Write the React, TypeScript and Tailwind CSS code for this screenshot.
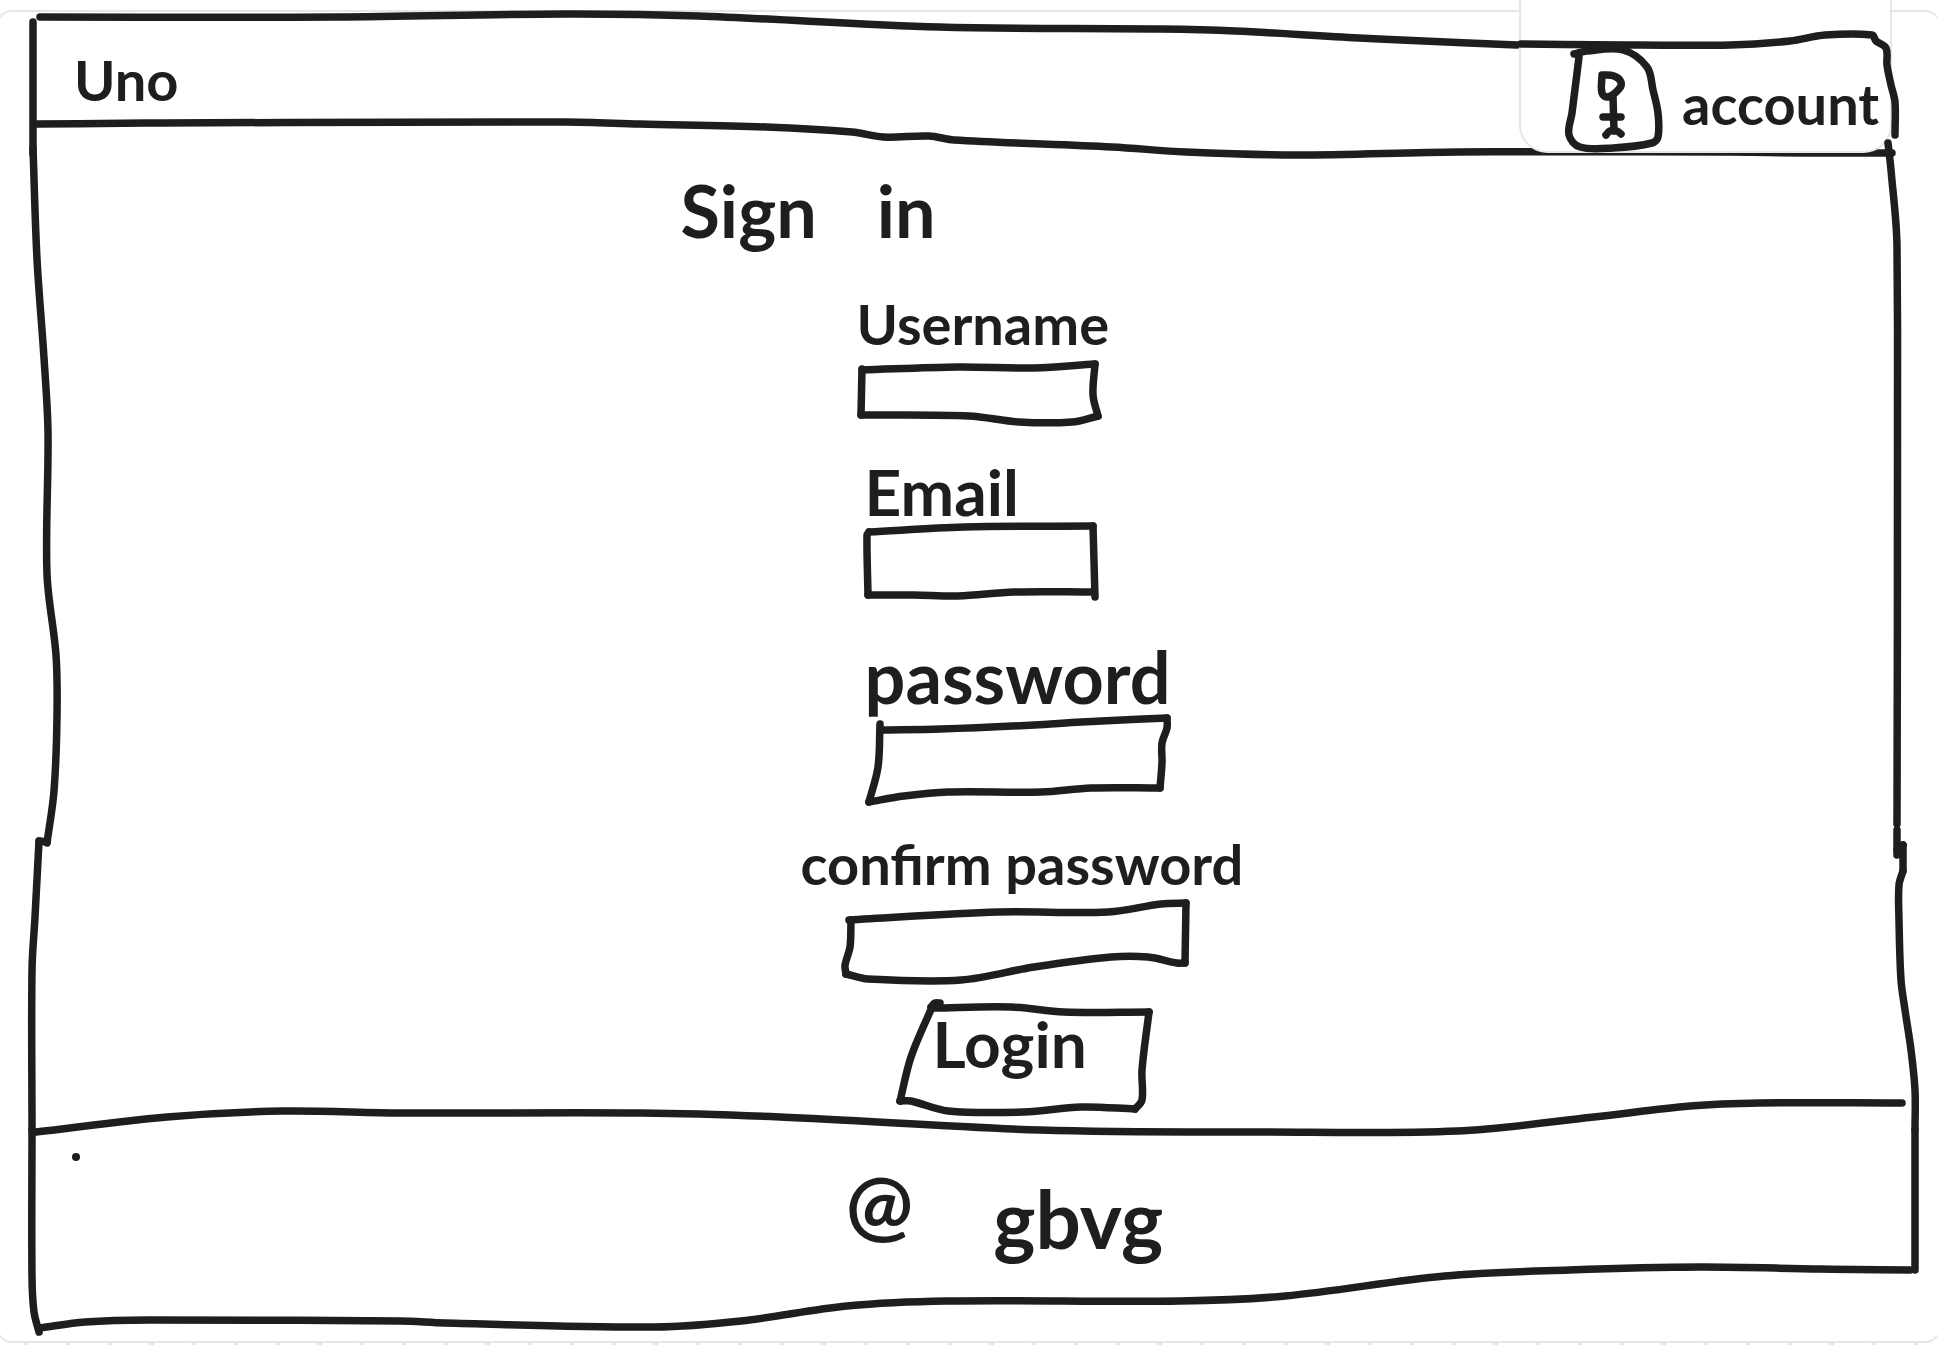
import type { ReactNode } from "react";

type Point = [number, number];
type Stroke = Point[];

/* Turns a list of points into one smooth pen stroke. */
function toPath(points: Stroke): string {
  let d = `M${points[0][0]} ${points[0][1]}`;
  for (let i = 0; i < points.length - 1; i++) {
    const p0 = points[Math.max(i - 1, 0)];
    const p1 = points[i];
    const p2 = points[i + 1];
    const p3 = points[Math.min(i + 2, points.length - 1)];
    const len = Math.hypot(p2[0] - p1[0], p2[1] - p1[1]);
    const before = Math.hypot(p2[0] - p0[0], p2[1] - p0[1]) || 1;
    const after = Math.hypot(p3[0] - p1[0], p3[1] - p1[1]) || 1;
    const k = len / 3;
    const c1 = [p1[0] + ((p2[0] - p0[0]) / before) * k, p1[1] + ((p2[1] - p0[1]) / before) * k];
    const c2 = [p2[0] - ((p3[0] - p1[0]) / after) * k, p2[1] - ((p3[1] - p1[1]) / after) * k];
    d += ` C${c1[0]} ${c1[1]} ${c2[0]} ${c2[1]} ${p2[0]} ${p2[1]}`;
  }
  return d;
}

function Sketch({ viewBox, strokes }: { viewBox: string; strokes: Stroke[] }) {
  return (
    <svg
      aria-hidden="true"
      viewBox={viewBox}
      preserveAspectRatio="none"
      className="pointer-events-none absolute inset-0 h-full w-full overflow-visible fill-none stroke-[#1e1e1e] stroke-[7.5]"
      strokeLinecap="round"
      strokeLinejoin="round"
    >
      {strokes.map((s, i) => (
        <path key={i} d={toPath(s)} vectorEffect="non-scaling-stroke" />
      ))}
    </svg>
  );
}

const headerStrokes: Stroke[] = [
  [[40, 17], [335, 17], [565, 14], [698, 16], [939, 27], [1161, 29], [1235, 31], [1359, 38], [1517, 45]],
  [[36, 124], [163, 123], [565, 122], [640, 124], [766, 127], [852, 132], [883, 137], [929, 136], [954, 140], [1112, 147], [1186, 152], [1297, 155], [1458, 152], [1720, 152], [1810, 153], [1892, 153]],
  [[33, 22], [33, 154]],
];

const accountStrokes: Stroke[] = [
  [[1521, 44], [1640, 45], [1730, 45], [1790, 41], [1825, 35], [1872, 35], [1876, 41], [1886, 48], [1887, 65], [1891, 85], [1895, 102], [1895, 135]],
];

const mainStrokes: Stroke[] = [
  [[33, 148], [37, 259], [44, 358], [48, 432], [47, 574], [56, 655], [57, 716], [54, 791], [47, 843]],
  [[47, 842], [39, 841]],
  [[39, 841], [35, 917], [32, 970], [32, 1130]],
  [[1888, 143], [1891, 170], [1897, 247], [1897, 824]],
  [[1897, 830], [1897, 855]],
  [[1897, 850], [1903, 845]],
  [[1903, 845], [1903, 871]],
  [[1903, 871], [1899, 885], [1899, 920], [1901, 980], [1905, 1010], [1911, 1050], [1915, 1090], [1915, 1130]],
];

const footerStrokes: Stroke[] = [
  [[36, 1132], [167, 1117], [283, 1111], [400, 1113], [642, 1113], [780, 1117], [1040, 1130], [1260, 1132], [1457, 1131], [1594, 1117], [1690, 1106], [1760, 1103], [1902, 1103]],
  [[32, 1130], [32, 1277], [34, 1312], [39, 1332]],
  [[40, 1328], [85, 1322], [150, 1320], [400, 1321], [445, 1323], [655, 1327], [741, 1321], [847, 1306], [947, 1301], [1180, 1301], [1285, 1296], [1445, 1276], [1569, 1270], [1700, 1267], [1820, 1269], [1910, 1270]],
  [[1915, 1130], [1915, 1270]],
];

const usernameStrokes: Stroke[] = [
  [[862, 370], [958, 367], [1034, 368], [1095, 364]],
  [[1095, 364], [1093, 395], [1098, 416]],
  [[1098, 416], [1072, 422], [1019, 422], [969, 416], [861, 415]],
  [[861, 415], [862, 369]],
];

const emailStrokes: Stroke[] = [
  [[868, 532], [963, 527], [1092, 526]],
  [[1092, 526], [1094, 597]],
  [[1093, 592], [1013, 592], [957, 596], [913, 595], [867, 595]],
  [[867, 595], [866, 535], [868, 532]],
];

const passwordStrokes: Stroke[] = [
  [[880, 730], [940, 729], [1033, 725], [1080, 722], [1166, 718]],
  [[1166, 718], [1166, 728], [1161, 743], [1161, 763], [1159, 788]],
  [[1159, 788], [1090, 788], [1040, 792], [947, 792], [903, 796], [868, 802]],
  [[868, 802], [877, 767], [879, 724]],
];

const confirmStrokes: Stroke[] = [
  [[848, 920], [997, 912], [1107, 912], [1160, 904], [1185, 903]],
  [[1185, 903], [1184, 963]],
  [[1184, 963], [1176, 963], [1147, 957], [1110, 957], [1033, 967], [960, 980], [867, 979], [845, 974]],
  [[845, 974], [844, 965], [849, 947], [850, 920]],
];

const loginStrokes: Stroke[] = [
  [[930, 1007], [934, 1003], [939, 1003]],
  [[932, 1008], [1010, 1007], [1063, 1012], [1148, 1012]],
  [[1148, 1012], [1141, 1070], [1141, 1100], [1134, 1109]],
  [[1134, 1109], [1080, 1107], [1023, 1112], [947, 1111], [910, 1101], [899, 1101]],
  [[899, 1101], [910, 1057], [931, 1007]],
];

function AccountIcon() {
  const box: Stroke[] = [
    [[1574, 54], [1587, 51], [1623, 50], [1647, 67], [1653, 90], [1658, 113], [1658, 137], [1652, 143], [1613, 148], [1580, 147], [1569, 135], [1572, 113], [1579, 57]],
    [[1602, 75], [1614, 76], [1621, 82], [1619, 89], [1608, 97], [1602, 93], [1602, 75]],
    [[1613, 97], [1614, 131]],
    [[1603, 117], [1621, 117]],
    [[1606, 135], [1610, 131], [1617, 131], [1621, 134]],
  ];
  return (
    <svg
      aria-hidden="true"
      viewBox="1568 46 92 104"
      className="h-[104px] w-[92px] shrink-0 overflow-visible fill-none stroke-[#1e1e1e] stroke-[7.5]"
      strokeLinecap="round"
      strokeLinejoin="round"
    >
      {box.map((s, i) => (
        <path key={i} d={toPath(s)} />
      ))}
    </svg>
  );
}

function Field({
  id,
  label,
  type,
  className,
  labelClass,
  boxClass,
  viewBox,
  strokes,
}: {
  id: string;
  label: ReactNode;
  type: string;
  className: string;
  labelClass: string;
  boxClass: string;
  viewBox: string;
  strokes: Stroke[];
}) {
  return (
    <div className={className}>
      <label htmlFor={id} className={`block leading-[60px] whitespace-nowrap ${labelClass}`}>
        {label}
      </label>
      <div className={`relative ${boxClass}`}>
        <Sketch viewBox={viewBox} strokes={strokes} />
        <input id={id} type={type} className="relative block h-full w-full bg-transparent px-4 text-2xl outline-none" />
      </div>
    </div>
  );
}

export default function App() {
  return (
    <div className="flex min-h-screen flex-col overflow-hidden bg-white font-['Lato','Open_Sans',sans-serif] font-bold text-[#1e1e1e]">
      <div className="relative flex grow flex-col">
        <div className="pointer-events-none absolute -inset-x-1 top-[10px] bottom-0 rounded-2xl border-2 border-[#e6e6e6]" />

        <header className="relative flex h-[154px] items-start justify-between pr-[45px] pl-[74px]">
          <Sketch viewBox="0 0 1937 154" strokes={headerStrokes} />
          <a href="#" className="relative pt-[50px] text-[56px] leading-[60px]">
            Uno
          </a>
          <a
            href="#account"
            className="relative flex h-[153px] w-[373px] gap-[22px] rounded-b-[28px] border-2 border-t-0 border-[#e6e6e6] bg-white pt-[46px] pl-[47px] text-[56px]"
          >
            <Sketch viewBox="1521 0 369 151" strokes={accountStrokes} />
            <AccountIcon />
            <span className="pt-7 leading-[60px]">account</span>
          </a>
        </header>

        <main className="relative flex grow flex-col items-center">
          <Sketch viewBox="0 154 1937 976" strokes={mainStrokes} />
          <form className="relative w-[576px] pt-4" onSubmit={(e) => e.preventDefault()}>
            <h1 className="mb-11 flex gap-[60px] text-[72px] leading-[80px]">
              <span>Sign </span>
              <span>in</span>
            </h1>
            <Field
              id="username"
              label="Username"
              type="text"
              className="mb-10 pl-[176px]"
              labelClass="pb-2 text-[56px]"
              boxClass="h-[60px] w-[240px] ml-[3px]"
              viewBox="860 362 240 60"
              strokes={usernameStrokes}
            />
            <Field
              id="email"
              label="Email"
              type="email"
              className="mb-12 pl-[184px]"
              labelClass="text-[64px]"
              boxClass="h-[76px] w-[232px]"
              viewBox="864 522 232 76"
              strokes={emailStrokes}
            />
            <Field
              id="password"
              label="password"
              type="password"
              className="mb-8 pl-[184px]"
              labelClass="pb-2 text-[72px]"
              boxClass="h-[88px] w-[304px]"
              viewBox="864 714 304 88"
              strokes={passwordStrokes}
            />
            <Field
              id="confirm"
              label="confirm password"
              type="password"
              className="mb-6 pl-[120px]"
              labelClass="pb-2 text-[56px]"
              boxClass="ml-10 h-[78px] w-[348px]"
              viewBox="840 902 348 78"
              strokes={confirmStrokes}
            />
            <button
              type="submit"
              className="relative ml-[216px] flex h-[108px] w-[252px] cursor-pointer items-start pt-2 pl-9 text-[64px] leading-[64px]"
            >
              <Sketch viewBox="896 1004 252 108" strokes={loginStrokes} />
              Login
            </button>
          </form>
        </main>

        <footer className="relative flex h-[213px] justify-center gap-20 pt-8 text-[80px] leading-[80px]">
          <Sketch viewBox="0 1130 1937 213" strokes={footerStrokes} />
          <span className="absolute top-[23px] left-[72px] h-2 w-2 rounded-full bg-[#1e1e1e]" />
          <span className="pl-[72px]">@</span>
          <span className="pt-4">gbvg</span>
        </footer>
      </div>
      <div className="h-[2px] bg-[repeating-linear-gradient(90deg,#fff_0,#fff_23px,#e6e6e6_23px,#e6e6e6_28px,#fff_28px,#fff_42px)]" />
    </div>
  );
}
